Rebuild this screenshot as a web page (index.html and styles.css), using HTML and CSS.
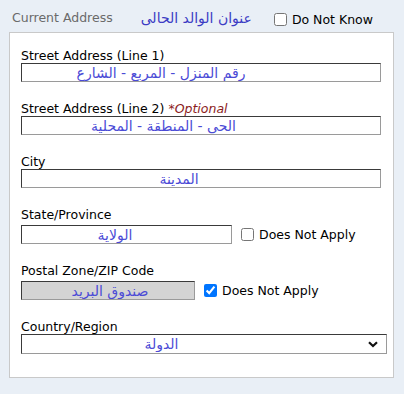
FILE: index.html
```html
<!DOCTYPE html>
<html lang="en">
<head>
    <meta charset="UTF-8">
    <meta name="viewport" content="width=device-width, initial-scale=1.0">
    <title>Current Address</title>
    <link rel="stylesheet" href="styles.css">
</head>
<body>

    <div class="address">
        <!-- header: legend + arabic title + checkbox -->
        <div class="address-head">
            <span class="legend">Current Address</span>
            <span class="legend-ar" dir="rtl">عنوان الوالد الحالى</span>
            <label class="check head-check"><input type="checkbox"> Do Not Know</label>
        </div>

        <div class="panel">
            <div class="field">
                <label>Street Address (Line 1)</label>
                <input type="text" class="ar-input w-full pr-80" dir="rtl" value="رقم المنزل - المربع - الشارع">
            </div>

            <div class="field">
                <label>Street Address (Line 2) <em class="optional">*Optional</em></label>
                <input type="text" class="ar-input w-full pr-75" dir="rtl" value="الحى - المنطقة - المحلية">
            </div>

            <div class="field">
                <label>City</label>
                <input type="text" class="ar-input w-full pr-44" dir="rtl" value="المدينة">
            </div>

            <div class="field">
                <label>State/Province</label>
                <div class="field-row">
                    <input type="text" class="ar-input w-state pr-23" dir="rtl" value="الولاية">
                    <label class="check"><input type="checkbox"> Does Not Apply</label>
                </div>
            </div>

            <div class="field">
                <label>Postal Zone/ZIP Code</label>
                <div class="field-row">
                    <input type="text" class="ar-input w-zip pl-4 disabled" dir="rtl" value="صندوق البريد" readonly>
                    <label class="check"><input type="checkbox" checked> Does Not Apply</label>
                </div>
            </div>

            <div class="field">
                <label>Country/Region</label>
                <div class="select-wrap">
                    <select class="ar-input w-select pr-85" dir="rtl">
                        <option>الدولة</option>
                    </select>
                    <svg class="chevron" width="10" height="7" viewBox="0 0 10 7">
                        <path d="M1 1.2 L5 5 L9 1.2" fill="none" stroke="#111" stroke-width="2.2"/>
                    </svg>
                </div>
            </div>
        </div>
    </div>

</body>
</html>
```

FILE: styles.css
```css
body {
    margin: 0;
    background-color: #e9eff6;
    font-family: "DejaVu Sans", Verdana, sans-serif;
    font-size: 12.5px;
    color: #000;
}
.address {
    padding: 0 0 0 9px;
}
.address-head {
    display: flex;
    align-items: flex-start;
    height: 32px;
    padding-left: 3px;
}
.legend {
    color: #6a6a6a;
    line-height: 15px;
    margin-top: 10px;
}
.legend-ar {
    font-size: 14px;
    line-height: 20px;
    color: #3b3bc4;
    margin-top: 8px;
    margin-left: 28px;
}
.check {
    display: flex;
    align-items: center;
    line-height: 15px;
}
.check input {
    width: 13px;
    height: 13px;
    margin: 0 5px 0 0;
}
.head-check {
    margin-top: 12px;
    margin-left: 22px;
}
.panel {
    width: 385px;
    height: 346px;
    box-sizing: border-box;
    background-color: #fff;
    border: 1px solid #c9c9c9;
    padding: 15px 0 0 11px;
}
.field {
    margin-bottom: 19px;
}
.field > label {
    display: block;
    line-height: 15px;
}
.optional {
    color: #8b1c1c;
}
.field-row {
    display: flex;
    align-items: center;
    gap: 9px;
    padding-top: 3px;
}
.ar-input {
    display: block;
    box-sizing: border-box;
    height: 19px;
    margin: 0;
    padding: 0;
    border: 1px solid;
    border-color: #3a3a3a #9a9a9a #9a9a9a #3a3a3a;
    border-radius: 0;
    background-color: #fff;
    font-family: "DejaVu Sans", sans-serif;
    font-size: 14px;
    color: #4b4bd6;
    text-align: center;
    outline: none;
}
.ar-input.disabled {
    background-color: #d4d4d4;
}
.w-full { width: 360px; }
.w-state { width: 211px; }
.w-zip { width: 174px; }
.w-select { width: 366px; height: 20px; }
.pr-80 { padding-right: 80px; }
.pr-75 { padding-right: 75px; }
.pr-44 { padding-right: 44px; }
.pr-23 { padding-right: 23px; }
.pr-85 { padding-right: 85px; }
.pl-4 { padding-left: 4px; }
.select-wrap {
    position: relative;
    width: 366px;
}
select.ar-input {
    -webkit-appearance: none;
    appearance: none;
    text-align-last: center;
}
.chevron {
    position: absolute;
    right: 9px;
    top: 7px;
    pointer-events: none;
}
```
